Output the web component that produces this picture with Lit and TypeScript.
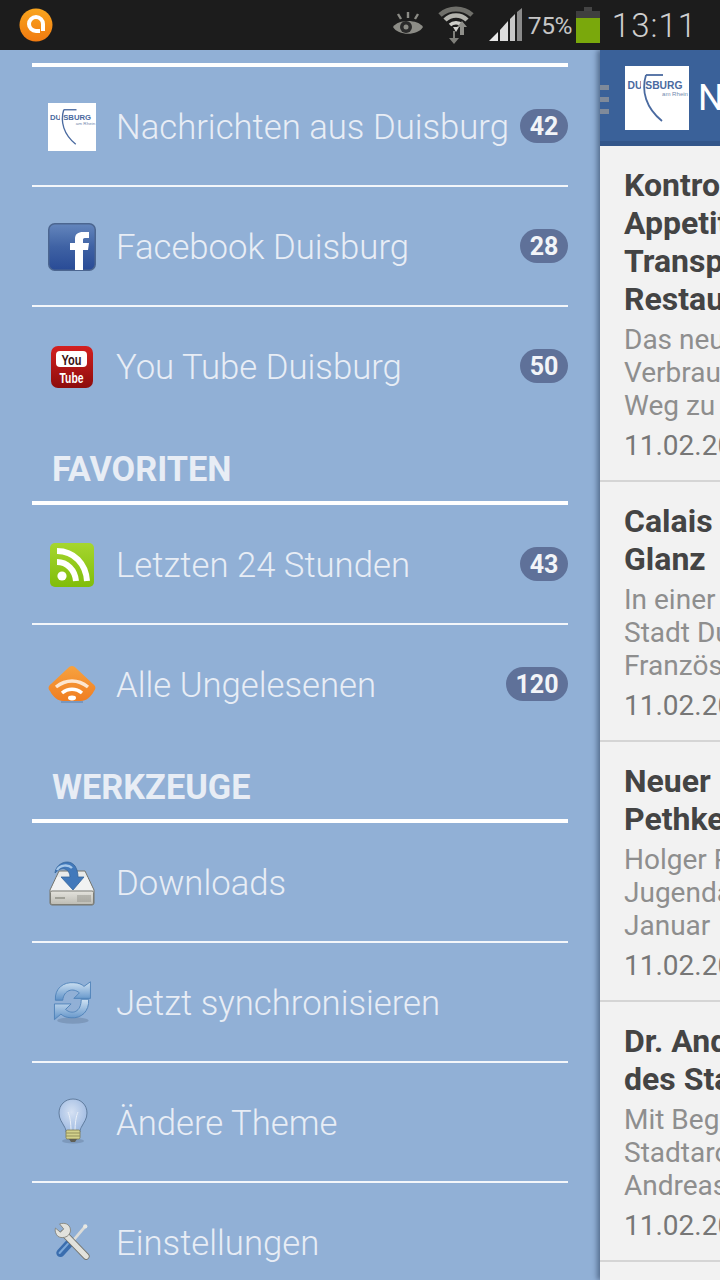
import { LitElement, html, css } from "lit";
import { customElement } from "lit/decorators.js";

const logo = (w: number, h: number) => html`<svg width=${w} height=${h} viewBox="0 0 64 64">
  <rect width="64" height="64" fill="#fff"/>
  <path d="M21 9h17" stroke="#4a6aa0" stroke-width="1.8" fill="none"/>
  <text x="2.5" y="23" font-family="'Liberation Sans',sans-serif" font-weight="700" font-size="10" textLength="55" lengthAdjust="spacingAndGlyphs" fill="#4a6aa0">DUISBURG</text>
  <rect x="16" y="13" width="4" height="12" fill="#fff"/>
  <path d="M21 9C16 25 21 42 37 55" stroke="#4a6aa0" stroke-width="1.8" fill="none"/>
  <text x="37" y="29.5" font-family="'Liberation Sans',sans-serif" font-size="5.6" textLength="26" lengthAdjust="spacingAndGlyphs" fill="#7389ae">am Rhein</text>
</svg>`;

const fb = html`<svg width="48" height="48" viewBox="0 0 48 48">
  <defs><linearGradient id="fbg" x1="0" y1="0" x2="0" y2="1"><stop offset="0" stop-color="#6486bd"/><stop offset=".5" stop-color="#3f62a4"/><stop offset="1" stop-color="#294b96"/></linearGradient></defs>
  <rect x=".75" y=".75" width="46.5" height="46.5" rx="6" fill="url(#fbg)" stroke="#4c6690" stroke-width="1.5"/>
  <path d="M27 47V27h-5v-7h5v-4c0-5 3-7 8-7h6v6h-4c-2 0-2 1-2 2v3h6l-1 7h-5v20z" fill="#fff"/>
</svg>`;

const yt = html`<svg width="48" height="48" viewBox="0 0 48 48">
  <defs><linearGradient id="ytg" x1="0" y1="0" x2="0" y2="1"><stop offset="0" stop-color="#d42020"/><stop offset="1" stop-color="#8c0c0c"/></linearGradient></defs>
  <rect x="3" y="3" width="42" height="42" rx="7" fill="url(#ytg)"/>
  <rect x="8" y="8" width="31" height="16" rx="4" fill="#fff"/>
  <text x="23.5" y="22" text-anchor="middle" font-family="'Liberation Sans',sans-serif" font-weight="700" font-size="15" textLength="20" lengthAdjust="spacingAndGlyphs" fill="#3a1414">You</text>
  <text x="23.5" y="40" text-anchor="middle" font-family="'Liberation Sans',sans-serif" font-weight="700" font-size="15" textLength="24" lengthAdjust="spacingAndGlyphs" fill="#fff">Tube</text>
</svg>`;

const rss = html`<svg width="48" height="48" viewBox="0 0 48 48">
  <defs><linearGradient id="rg" x1="0" y1="0" x2="0" y2="1"><stop offset="0" stop-color="#a6d62e"/><stop offset="1" stop-color="#80bd0a"/></linearGradient></defs>
  <rect x="2" y="2" width="44" height="44" rx="5" fill="url(#rg)"/>
  <circle cx="14" cy="35" r="4.6" fill="#fff"/>
  <path d="M9 21c10 0 18 8 19 19" stroke="#fff" stroke-width="6" fill="none"/>
  <path d="M9 10c17 0 29 13 30 30" stroke="#fff" stroke-width="6" fill="none"/>
</svg>`;

const orange = html`<svg width="48" height="48" viewBox="0 0 48 48">
  <defs><linearGradient id="og" x1="0" y1="0" x2="0" y2="1"><stop offset="0" stop-color="#f7a23f"/><stop offset="1" stop-color="#f07e22"/></linearGradient></defs>
  <path d="M24 5c2 0 3 1 5 3l16 15c3 2 3 5 1 7-3 6-8 10-13 10H15c-5 0-10-4-13-10-2-2-2-5 1-7L19 8c2-2 3-3 5-3z" fill="url(#og)"/>
  <path d="M8 26c10-8 22-8 32 0" stroke="#fde6cf" stroke-width="3.4" fill="none"/>
  <path d="M14 32c6-5 14-5 20 0" stroke="#fff" stroke-width="3.4" fill="none"/>
  <ellipse cx="24" cy="37" rx="4" ry="2.4" fill="#fff"/>
  <path d="M13 41h22" stroke="#5f7fa8" stroke-width="1"/>
</svg>`;

const dl = html`<svg width="48" height="48" viewBox="0 0 48 48">
  <defs><linearGradient id="dlb" x1="0" y1="0" x2="0" y2="1"><stop offset="0" stop-color="#e4e3dd"/><stop offset="1" stop-color="#bdbcb4"/></linearGradient></defs>
  <path d="M11 12h26l9 19v13a2 2 0 0 1-2 2H4a2 2 0 0 1-2-2V31z" fill="#e8eaea" stroke="#74746d" stroke-width="1"/>
  <path d="M9 18h30l6 13H3z" fill="#f1f2f2"/>
  <rect x="2.5" y="32" width="43" height="13.5" rx="1.5" fill="url(#dlb)" stroke="#7d7d76"/>
  <path d="M30 36v7M32 36v7M34 36v7M36 36v7M38 36v7M40 36v7M42 36v7" stroke="#94948c" stroke-width="1"/>
  <path d="M7 39h10" stroke="#a0a097" stroke-width="2"/>
  <path d="M7 14C8 4 21-1 27 7c2 3 3 7 3 11h6L25 31 13 18h9c0-4-2-7-5-8-4-1-7 1-10 4z" fill="#4279bb" stroke="#356499" stroke-width=".8"/>
  <path d="M9 11c3-5 11-6 15-2" stroke="#a6c8ea" stroke-width="2.4" fill="none"/>
</svg>`;

const sync = html`<svg width="48" height="50" viewBox="-2 -1 52 54">
  <defs><linearGradient id="sg" x1="0" y1="0" x2="0" y2="1"><stop offset="0" stop-color="#cfe2f3"/><stop offset="1" stop-color="#5f92c8"/></linearGradient></defs>
  <ellipse cx="25" cy="45" rx="17" ry="3.5" fill="#7d99bc"/>
  <path d="M6 23C5 10 15 3 26 4c5 0 9 2 11 4l7-5v18H26l6-6c-7-6-17-3-18 8z" fill="url(#sg)" stroke="#4f82b8" stroke-width="1"/>
  <path d="M42 22c1 13-8 21-19 20-5 0-9-2-11-4l-7 6V27h18l-6 6c7 6 17 3 17-11z" fill="url(#sg)" stroke="#4f82b8" stroke-width="1"/>
</svg>`;

const bulb = html`<svg width="48" height="50" viewBox="0 0 48 50">
  <defs><radialGradient id="bg" cx=".45" cy=".4" r=".6"><stop offset="0" stop-color="#d5e1f3"/><stop offset="1" stop-color="#a0bbe2"/></radialGradient></defs>
  <ellipse cx="25" cy="43" rx="11" ry="2.5" fill="#7d99bc"/>
  <path d="M25 1c8 0 14 6 14 14 0 6-3 9-5 13-1 2-2 3-2 6H18c0-3-1-4-2-6-2-4-5-7-5-13C11 7 17 1 25 1z" fill="url(#bg)" stroke="#607c9e" stroke-width="1"/>
  <path d="M20 14c2 4 3 12 3 19M30 14c-2 4-3 12-3 19" stroke="#eaf0f8" stroke-width="1" fill="none"/>
  <rect x="18" y="32" width="14" height="9" rx="1.5" fill="#d4d28c" stroke="#7d7a4c" stroke-width=".8"/>
  <path d="M18 35h14M18 38h14" stroke="#94915c" stroke-width="1"/>
  <path d="M21 41h8l-2 3h-4z" fill="#5f5f55"/>
</svg>`;

const tools = html`<svg width="48" height="50" viewBox="-5 -4 58 60">
  <path d="M40 6L22 27" stroke="#dcdcd8" stroke-width="3.4"/>
  <circle cx="40" cy="6" r="2.6" fill="#e8e8e4"/>
  <path d="M21 26L10 38" stroke="#3a6dae" stroke-width="10" stroke-linecap="round"/>
  <path d="M19 27L9 38" stroke="#7ba8da" stroke-width="2.5" stroke-linecap="round"/>
  <path d="M14 14L41 42" stroke="#74746d" stroke-width="8.4" stroke-linecap="round"/>
  <path d="M14 14L41 42" stroke="#e2e2dd" stroke-width="6.4" stroke-linecap="round"/>
  <path d="M4 8l6 5 4-4-5-6c6-2 12 0 13 6 1 3-1 7-4 9-4 2-8 2-11 0-3-3-4-7-3-10z" fill="#e2e2dd" stroke="#7d7d75" stroke-width="1"/>
</svg>`;

const logoIcon = logo(48, 48);

const sections: { title?: string; rows: { icon: unknown; label: string; count?: number }[] }[] = [
  { rows: [
    { icon: logoIcon, label: "Nachrichten aus Duisburg", count: 42 },
    { icon: fb, label: "Facebook Duisburg", count: 28 },
    { icon: yt, label: "You Tube Duisburg", count: 50 },
  ] },
  { title: "FAVORITEN", rows: [
    { icon: rss, label: "Letzten 24 Stunden", count: 43 },
    { icon: orange, label: "Alle Ungelesenen", count: 120 },
  ] },
  { title: "WERKZEUGE", rows: [
    { icon: dl, label: "Downloads" },
    { icon: sync, label: "Jetzt synchronisieren" },
    { icon: bulb, label: "Ändere Theme" },
    { icon: tools, label: "Einstellungen" },
  ] },
];

const articles = [
  { title: ["Kontrollen", "Appetit", "Transport", "Restaurant"], body: ["Das neue", "Verbraucher", "Weg zu"], h: 336 },
  { title: ["Calais", "Glanz"], body: ["In einer", "Stadt Duisburg", "Französisch"], h: 260 },
  { title: ["Neuer", "Pethke"], body: ["Holger P", "Jugendamt", "Januar"], h: 260 },
  { title: ["Dr. Andreas", "des Stadt"], body: ["Mit Beginn", "Stadtarchiv", "Andreas"], h: 260 },
];

@customElement("app-root")
export class AppRoot extends LitElement {
  static styles = css`
    :host { display: block; width: 720px; height: 1280px; overflow: hidden; font-family: Roboto, "Liberation Sans", sans-serif; background: #91b0d6; }
    .status { height: 50px; background: #1c1c1c; display: flex; align-items: center; }
    .notif { margin-left: 19px; display: flex; }
    .sysicons { margin-left: auto; display: flex; align-items: center; }
    .eye { margin-right: 14px; display: flex; }
    .wifi { margin-right: 15px; display: flex; }
    .signal { display: flex; margin-right: 5px; }
    .pct { font-size: 24.5px; color: #c6c6c6; letter-spacing: -0.5px; margin-right: 4px; }
    .batt { display: flex; margin-right: 12px; }
    .clock { font-size: 33px; font-weight: 300; color: #cfcfcf; letter-spacing: 1px; margin-right: 23px; }
    .main { display: flex; height: 1230px; overflow: hidden; }
    .drawer { flex: none; width: 600px; box-sizing: border-box; padding: 13px 32px 0; background: #91b0d6; }
    .thick { height: 4px; background: #fff; }
    .row { height: 120px; box-sizing: border-box; border-bottom: 2px solid #f3f6fa; display: flex; align-items: center; padding: 2px 0 0 16px; }
    .row.end { border-bottom-color: transparent; }
    .icon { width: 48px; height: 50px; flex: none; display: flex; align-items: center; justify-content: center; margin-right: 20px; }
    .label { flex: 1; font-size: 34.7px; font-weight: 300; color: #e8edf5; white-space: nowrap; }
    .count { flex: none; height: 34px; min-width: 48px; box-sizing: border-box; padding: 0 9.5px; border-radius: 17px; background: #5f7199; color: #f2f4f8; font-size: 25px; font-weight: 700; display: flex; align-items: center; justify-content: center; margin-top: -2px; }
    .head { height: 74px; box-sizing: border-box; padding: 0 0 12px 20px; display: flex; align-items: flex-end; font-size: 34.3px; font-weight: 700; color: #e8edf5; line-height: 40px; }
    .panel { flex: none; width: 120px; background: #f2f2f2; overflow: hidden; position: relative; box-shadow: -3px 0 5px rgba(40, 60, 90, 0.55); }
    .bar { height: 96px; background: #3a6199; display: flex; align-items: center; box-sizing: border-box; padding: 5px 0 0 25px; border-bottom: 5px solid #33568a; }
    .bar svg { flex: none; }
    .bar span { font-size: 36px; color: #fff; margin-left: 9px; white-space: nowrap; }
    .grip { position: absolute; left: 0; top: 35px; display: flex; flex-direction: column; gap: 7px; }
    .grip i { display: block; width: 9px; height: 5px; background: #7f8a9a; }
    .art { box-sizing: border-box; padding: 20px 0 0 24px; border-bottom: 2px solid #d5d5d5; white-space: nowrap; }
    .t { font-size: 32px; font-weight: 700; line-height: 38px; color: #444; }
    .b { font-size: 28px; line-height: 33px; color: #8e8e8e; }
    .b.first { margin-top: 5px; }
    .d { font-size: 28px; line-height: 33px; color: #777; margin-top: 7px; }
  `;

  render() {
    return html`
      <div class="status">
        <div class="notif">
          <svg width="34" height="34" viewBox="0 0 34 34">
            <defs><linearGradient id="ng" x1="0" y1="0" x2="0" y2="1"><stop offset="0" stop-color="#f9a51e"/><stop offset="1" stop-color="#f07a10"/></linearGradient></defs>
            <ellipse cx="17" cy="17" rx="16.5" ry="16.5" fill="url(#ng)"/>
            <path d="M24 23V16a7 7 0 1 0-7 7h4" stroke="#fff" stroke-width="4" fill="none"/>
          </svg>
        </div>
        <div class="sysicons">
          <div class="eye"><svg width="32" height="26" viewBox="0 0 32 26">
            <path d="M1 15C6 7 26 7 31 15 26 24 6 24 1 15z" fill="#8c8c86"/>
            <circle cx="14" cy="15" r="6" fill="#2a2a2a"/><circle cx="14" cy="15" r="2.5" fill="#8c8c86"/>
            <path d="M16 0v6M6 2l3 5M26 2l-3 5" stroke="#8c8c86" stroke-width="2.4"/>
          </svg></div>
          <div class="wifi"><svg width="36" height="38" viewBox="0 0 36 38">
            <path d="M2 9c9-8 23-8 32 0" stroke="#6f6f6a" stroke-width="5" fill="none"/>
            <path d="M7 14c6-6 16-6 22 0" stroke="#b4b4ae" stroke-width="4.5" fill="none"/>
            <path d="M12 19c3-3 9-3 12 0" stroke="#cfcfca" stroke-width="3.5" fill="none"/>
            <path d="M15 21h6l-3 5z" fill="#d4d4d0"/>
            <path d="M15 25v7h-4l5 6 5-6h-4v-7z" fill="#7f7f7a"/>
            <path d="M24 15l-5 6h3v8h4v-8h3z" fill="#8f8f8a"/>
          </svg></div>
          <div class="signal"><svg width="34" height="34" viewBox="0 0 34 34">
            <path d="M0 33L9 24V33z" fill="#e8e8e8"/>
            <path d="M11 22l8-9V33h-8z" fill="#dcdcdc"/>
            <path d="M21 11l5-5V33h-5z" fill="#c8c8c8"/>
            <path d="M28 4l5-4V33h-5z" fill="#8a8a8a"/>
          </svg></div>
          <span class="pct">75%</span>
          <div class="batt"><svg width="24" height="36" viewBox="0 0 24 36">
            <rect x="8" y="0" width="8" height="4" fill="#444"/>
            <rect x="0" y="4" width="24" height="7" fill="#3f3f3f"/>
            <rect x="0" y="11" width="24" height="25" fill="#7aa80c"/>
          </svg></div>
          <span class="clock">13:11</span>
        </div>
      </div>
      <div class="main">
        <div class="drawer">
          <div class="thick"></div>
          ${sections.map((s) => html`
            ${s.title ? html`<div class="head">${s.title}</div><div class="thick"></div>` : ""}
            ${s.rows.map((r, i) => html`
              <div class="row ${i === s.rows.length - 1 ? "end" : ""}">
                <div class="icon">${r.icon}</div>
                <div class="label">${r.label}</div>
                ${r.count !== undefined ? html`<div class="count">${r.count}</div>` : ""}
              </div>`)}`)}
        </div>
        <div class="panel">
          <div class="bar">${logo(64, 64)}<span>Nachrichten</span></div>
          <div class="grip"><i></i><i></i><i></i></div>
          ${articles.map((a) => html`
            <div class="art" style="height:${a.h}px">
              <div>${a.title.map((t) => html`<div class="t">${t}</div>`)}</div>
              ${a.body.map((t, i) => html`<div class="b ${i === 0 ? "first" : ""}">${t}</div>`)}
              <div class="d">11.02.2014</div>
            </div>`)}
        </div>
      </div>
    `;
  }
}
